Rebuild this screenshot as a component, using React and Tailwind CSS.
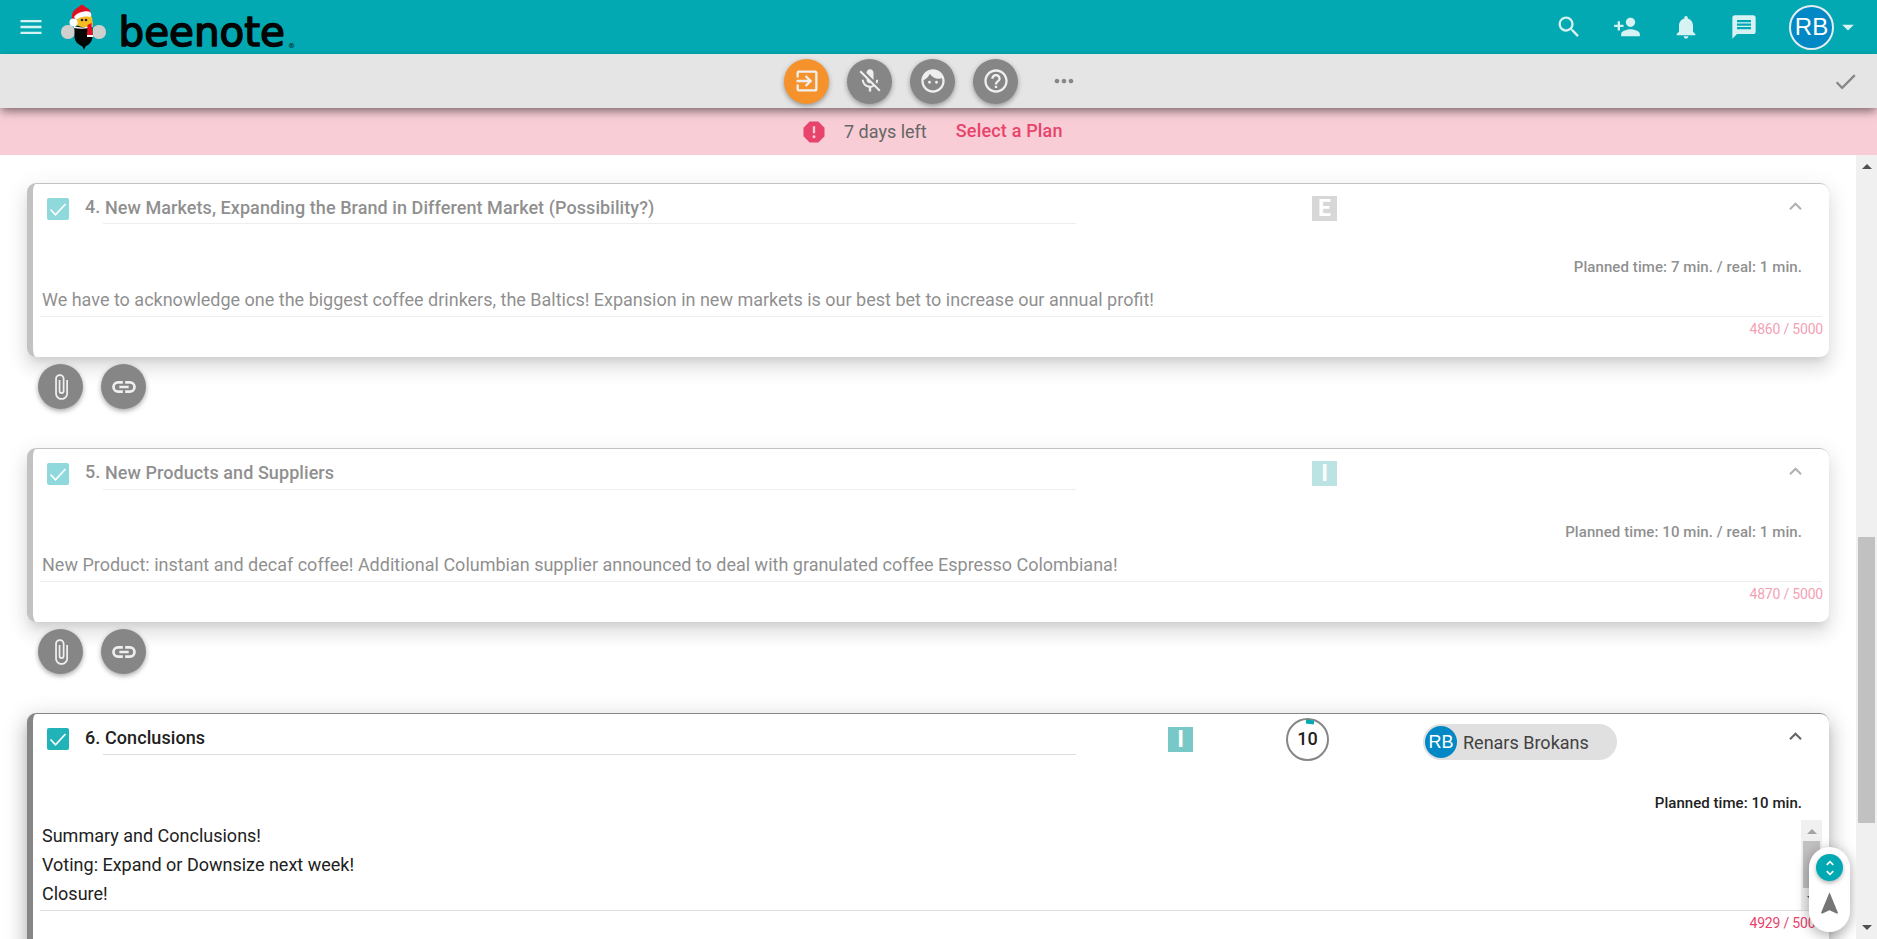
import React from "react";
import {
  MdMenu, MdSearch, MdPersonAdd, MdNotifications, MdMessage, MdArrowDropDown, MdExitToApp, MdMicOff,
  MdFace, MdHelpOutline, MdMoreHoriz, MdCheck, MdReport, MdAttachFile, MdKeyboardArrowUp,
  MdUnfoldMore, MdNavigation,
} from "react-icons/md";

function BeeMark() {
  return (
    <svg width="46" height="46" viewBox="0 0 46 46" className="ml-[16px] shrink-0">
      <rect x="0" y="21" width="14" height="14" rx="6.5" fill="#cfcfcd" />
      <rect x="31" y="21" width="14" height="14" rx="6.5" fill="#cfcfcd" />
      <path d="M13.500 22h18v10c0 6-3 8-7 10.500l-1.500 3.500-1.500-3.500c-5-2.500-8-5-8-10.500z" fill="#050505" />
      <path d="M16 13c4-3 11-3 15 0l1 8c-5 3-12 3-16 0z" fill="#f6bd22" />
      <path d="M11 15c-1-6 2-9 5-11l5-3.500L26 4c3 1 4 4 4 7l-15 3-2 3z" fill="#e01020" />
      <path d="M13 13c3-5 13-7 16-5 2 2 1.500 5 0 5-5-1-9 0-14 2.500z" fill="#fff" />
      <circle cx="12.500" cy="18.500" r="4" fill="#fff" />
      <path d="M13 22c5 2 13 2 18-1l1 2c-6 2-13 2-19 1z" fill="#fff" />
      <path d="M26.500 21l4-2 1 13h-5.500z" fill="#e01020" />
      <path d="M26 31h6v2h-6z" fill="#fff" />
      <circle cx="21" cy="16" r="1.300" fill="#222" />
      <circle cx="25" cy="16" r="1.300" fill="#222" />
    </svg>
  );
}

function Wordmark() {
  return (
    <svg width="180" height="54" viewBox="0 0 180 54" className="ml-[12px] shrink-0 overflow-visible">
      <text x="-0.500" y="46.300" fontFamily="DejaVu Sans" fontSize="40" fill="#040404" stroke="#040404" strokeWidth="1.500" strokeLinejoin="round" textLength="166.500" lengthAdjust="spacingAndGlyphs">beenote</text>
      <text x="169" y="47.500" fontFamily="DejaVu Sans" fontSize="7" fontWeight="bold" fill="#06343a">®</text>
    </svg>
  );
}

function LinkIcon({ size, className }) {
  return (
    <svg width={size} height={size} viewBox="0 0 24 24" fill="none" stroke="currentColor" strokeWidth="2.300" className={className}>
      <path d="M11 8H7a4 4 0 0 0 0 8h4M13 8h4a4 4 0 0 1 0 8h-4M8 12h8" />
    </svg>
  );
}

function RoundButton({ icon: Icon, color = "bg-[#868686]" }) {
  return (
    <button className={"flex size-[45px] shrink-0 items-center justify-center rounded-full text-[#efefef] shadow-[0_2px_5px_rgba(0,0,0,0.35)] " + color}>
      <Icon size={28} />
    </button>
  );
}

function Badge({ letter, color, className }) {
  return (
    <span className={"flex h-[25px] w-[25px] shrink-0 items-center justify-center text-[23px] leading-none font-bold text-white " + color + " " + className}>
      {letter}
    </span>
  );
}

function Checkbox() {
  return (
    <span className="mt-[14px] ml-[14px] flex size-[22px] shrink-0 items-center justify-center rounded-[2px] bg-[#22b3b9]">
      <svg width="22" height="22" viewBox="0 0 22 22" fill="none" stroke="#fff" strokeWidth="1.700">
        <path d="M3.500 11.500l5 5.300L18.500 6" />
      </svg>
    </span>
  );
}

function Topic({ number, title, lines, counter, planned, active, badge, extras, titleHeight = "h-[40px]" }) {
  return (
    <section className={"rounded-[9px] border-t border-l-[6px] bg-white " + (active ? "h-[260px] border-[#868686] shadow-[0_7px_8px_-4px_rgba(0,0,0,0.2),0_12px_17px_2px_rgba(0,0,0,0.14),0_5px_22px_4px_rgba(0,0,0,0.12)]" : "h-[174px] border-[#c2c2c2] shadow-[0_7px_8px_-4px_rgba(0,0,0,0.1),0_12px_17px_2px_rgba(0,0,0,0.07),0_5px_22px_4px_rgba(0,0,0,0.06)]")}>
      <div className={active ? "" : "opacity-50"}>
        <div className={"flex items-start " + (active ? "h-[77px]" : "h-[71px]")}>
          <Checkbox />
          <span className={"ml-[16px] w-[18px] shrink-0 text-[18px] leading-[24px] font-medium " + (active ? "mt-[12px]" : "mt-[11px]")}>{number}.</span>
          <span className={"w-[973px] shrink-0 border-b border-[#dedede] pt-[12px] pl-[2px] text-[18px] leading-[24px] font-medium tracking-[0.07px] " + titleHeight}>{title}</span>
          {badge}
          {extras}
          <MdKeyboardArrowUp size={25} className="mt-[10px] mr-[21px] ml-auto text-[#666]" />
        </div>
        <p className={"mr-[27px] h-[24px] text-right text-[15px] leading-[24px] font-medium " + (active ? "tracking-[0.05px]" : "tracking-[0.08px]")}>{planned}</p>
        <div className={"mr-[7px] ml-[7px] flex justify-between border-b border-[#dedede] " + (active ? "mt-[5px] h-[91px]" : "mt-[5px] h-[33px]")}>
          <div className="pt-[1px] pl-[2px] text-[18px] leading-[29px]">
            {lines.map((line) => <p key={line}>{line}</p>)}
          </div>
          {active && (
            <div className="flex h-[90px] w-[21px] flex-col items-center bg-[#f0f0f0]">
              <span className="mt-[9px] border-x-[5px] border-b-[5px] border-x-transparent border-b-[#a3a3a3]" />
              <span className="mt-[7px] h-[47px] w-[17px] bg-[#c1c1c1]" />
              <span className="mt-[8px] border-x-[5px] border-t-[5px] border-x-transparent border-t-[#505050]" />
            </div>
          )}
        </div>
        <p className="mr-[6px] text-right text-[14px] leading-[24px] tracking-[-0.2px] text-[#e8436b]">{counter}</p>
      </div>
    </section>
  );
}

function Attachments() {
  return (
    <div className="relative flex h-[91px] gap-[18px] pt-[7px] pl-[11px]">
      <RoundButton icon={MdAttachFile} />
      <RoundButton icon={LinkIcon} />
    </div>
  );
}

export default function App() {
  return (
    <div className="flex h-[939px] w-[1877px] flex-col overflow-hidden bg-white text-[#212121] [font-family:Roboto,sans-serif]">
      <header className="flex h-[54px] shrink-0 items-center bg-[#03a9b2] text-[#d6f2f3]">
        <MdMenu size={28} className="ml-[17px] shrink-0" />
        <BeeMark />
        <Wordmark />
        <div className="ml-auto flex items-center">
          <div className="mr-[31px] flex items-center gap-[30.5px]">
            <MdSearch size={28} />
            <MdPersonAdd size={28} />
            <MdNotifications size={28} />
            <MdMessage size={28} />
          </div>
          <span className="flex size-[45px] items-center justify-center rounded-full border-2 border-[#e4eef2] bg-[#0288c4] text-[24px] text-white [font-family:'Liberation_Sans',sans-serif]">RB</span>
          <MdArrowDropDown size={28} className="mr-[15px]" />
        </div>
      </header>

      <div className="z-10 flex h-[54px] shrink-0 items-center bg-[#e5e5e5] shadow-[0_4px_9px_-1px_rgba(0,0,0,0.5)]">
        <div className="ml-[784px] flex items-center gap-[18px]">
          <RoundButton icon={MdExitToApp} color="bg-[#f6922b]" />
          <RoundButton icon={MdMicOff} />
          <RoundButton icon={MdFace} />
          <RoundButton icon={MdHelpOutline} />
          <MdMoreHoriz size={28} className="ml-[14px] text-[#868686]" />
        </div>
        <MdCheck size={27} className="mr-[18px] ml-auto text-[#868686]" />
      </div>

      <div className="flex h-[47px] shrink-0 items-center bg-[#f8cdd6] pl-[800px] text-[18px]">
        <MdReport size={28} className="text-[#e8436b]" />
        <span className="ml-[16px] text-[#666]">7 days left</span>
        <span className="ml-[29px] pb-[2px] font-medium tracking-[0.18px] text-[#e8436b]">Select a Plan</span>
      </div>

      <div className="flex min-h-0 flex-1">
        <main className="relative w-[1856px] overflow-hidden pt-[28px] pr-[27px] pl-[27px]">
          <Topic
            number={4}
            title="New Markets, Expanding the Brand in Different Market (Possibility?)"
            lines={["We have to acknowledge one the biggest coffee drinkers, the Baltics! Expansion in new markets is our best bet to increase our annual profit!"]}
            planned="Planned time: 7 min. / real: 1 min."
            counter="4860 / 5000"
            badge={<Badge letter="E" color="bg-[#b1b1b1]" className="mt-[12px] ml-[236px]" />}
          />
          <Attachments />
          <Topic
            number={5}
            title="New Products and Suppliers"
            lines={["New Product: instant and decaf coffee! Additional Columbian supplier announced to deal with granulated coffee Espresso Colombiana!"]}
            planned="Planned time: 10 min. / real: 1 min."
            counter="4870 / 5000"
            titleHeight="h-[41px]"
            badge={<Badge letter="I" color="bg-[#79c8c8]" className="mt-[12px] ml-[236px]" />}
          />
          <Attachments />
          <Topic
            active
            number={6}
            title="Conclusions"
            lines={["Summary and Conclusions!", "Voting: Expand or Downsize next week!", "Closure!"]}
            planned="Planned time: 10 min."
            counter="4929 / 5000"
            titleHeight="h-[41px]"
            badge={<Badge letter="I" color="bg-[#79c8c8]" className="mt-[13px] ml-[92px]" />}
            extras={
              <>
                <span className="relative mt-[4px] ml-[93px] flex size-[43px] shrink-0 items-center justify-center rounded-full border-2 border-[#868686] pb-[3px] text-[18px] font-medium">
                  10
                  <span className="absolute top-0 left-[18px] h-[4px] w-[8px] rotate-6 bg-[#03a9b2]" />
                </span>
                <span className="mt-[10px] ml-[94px] flex h-[36px] w-[194px] shrink-0 items-center rounded-full bg-[#e0e0e0] pl-[2px] text-[18px] text-[#424242]">
                  <span className="mr-[6px] flex size-[32px] items-center justify-center rounded-full bg-[#0288c4] text-[18px] text-white [font-family:'Liberation_Sans',sans-serif]">RB</span>
                  Renars Brokans
                </span>
              </>
            }
          />
          <div className="absolute top-[692px] left-[1809px] flex h-[85px] w-[41px] flex-col items-center rounded-full bg-white pt-[7px] shadow-[0_3px_14px_rgba(0,0,0,0.35)]">
            <span className="flex size-[27px] items-center justify-center rounded-full bg-[#03a9b2] text-white shadow-[0_2px_4px_rgba(0,0,0,0.3)]">
              <MdUnfoldMore size={20} />
            </span>
            <MdNavigation size={27} className="mt-[9px] text-[#757575]" />
          </div>
        </main>

        <div className="flex w-[21px] flex-col items-center bg-[#f0f0f0]">
          <span className="mt-[9px] border-x-[5px] border-b-[5px] border-x-transparent border-b-[#505050]" />
          <span className="mt-[368px] h-[286px] w-[17px] bg-[#c1c1c1]" />
          <span className="mt-[102px] border-x-[5px] border-t-[5px] border-x-transparent border-t-[#505050]" />
        </div>
      </div>
    </div>
  );
}
